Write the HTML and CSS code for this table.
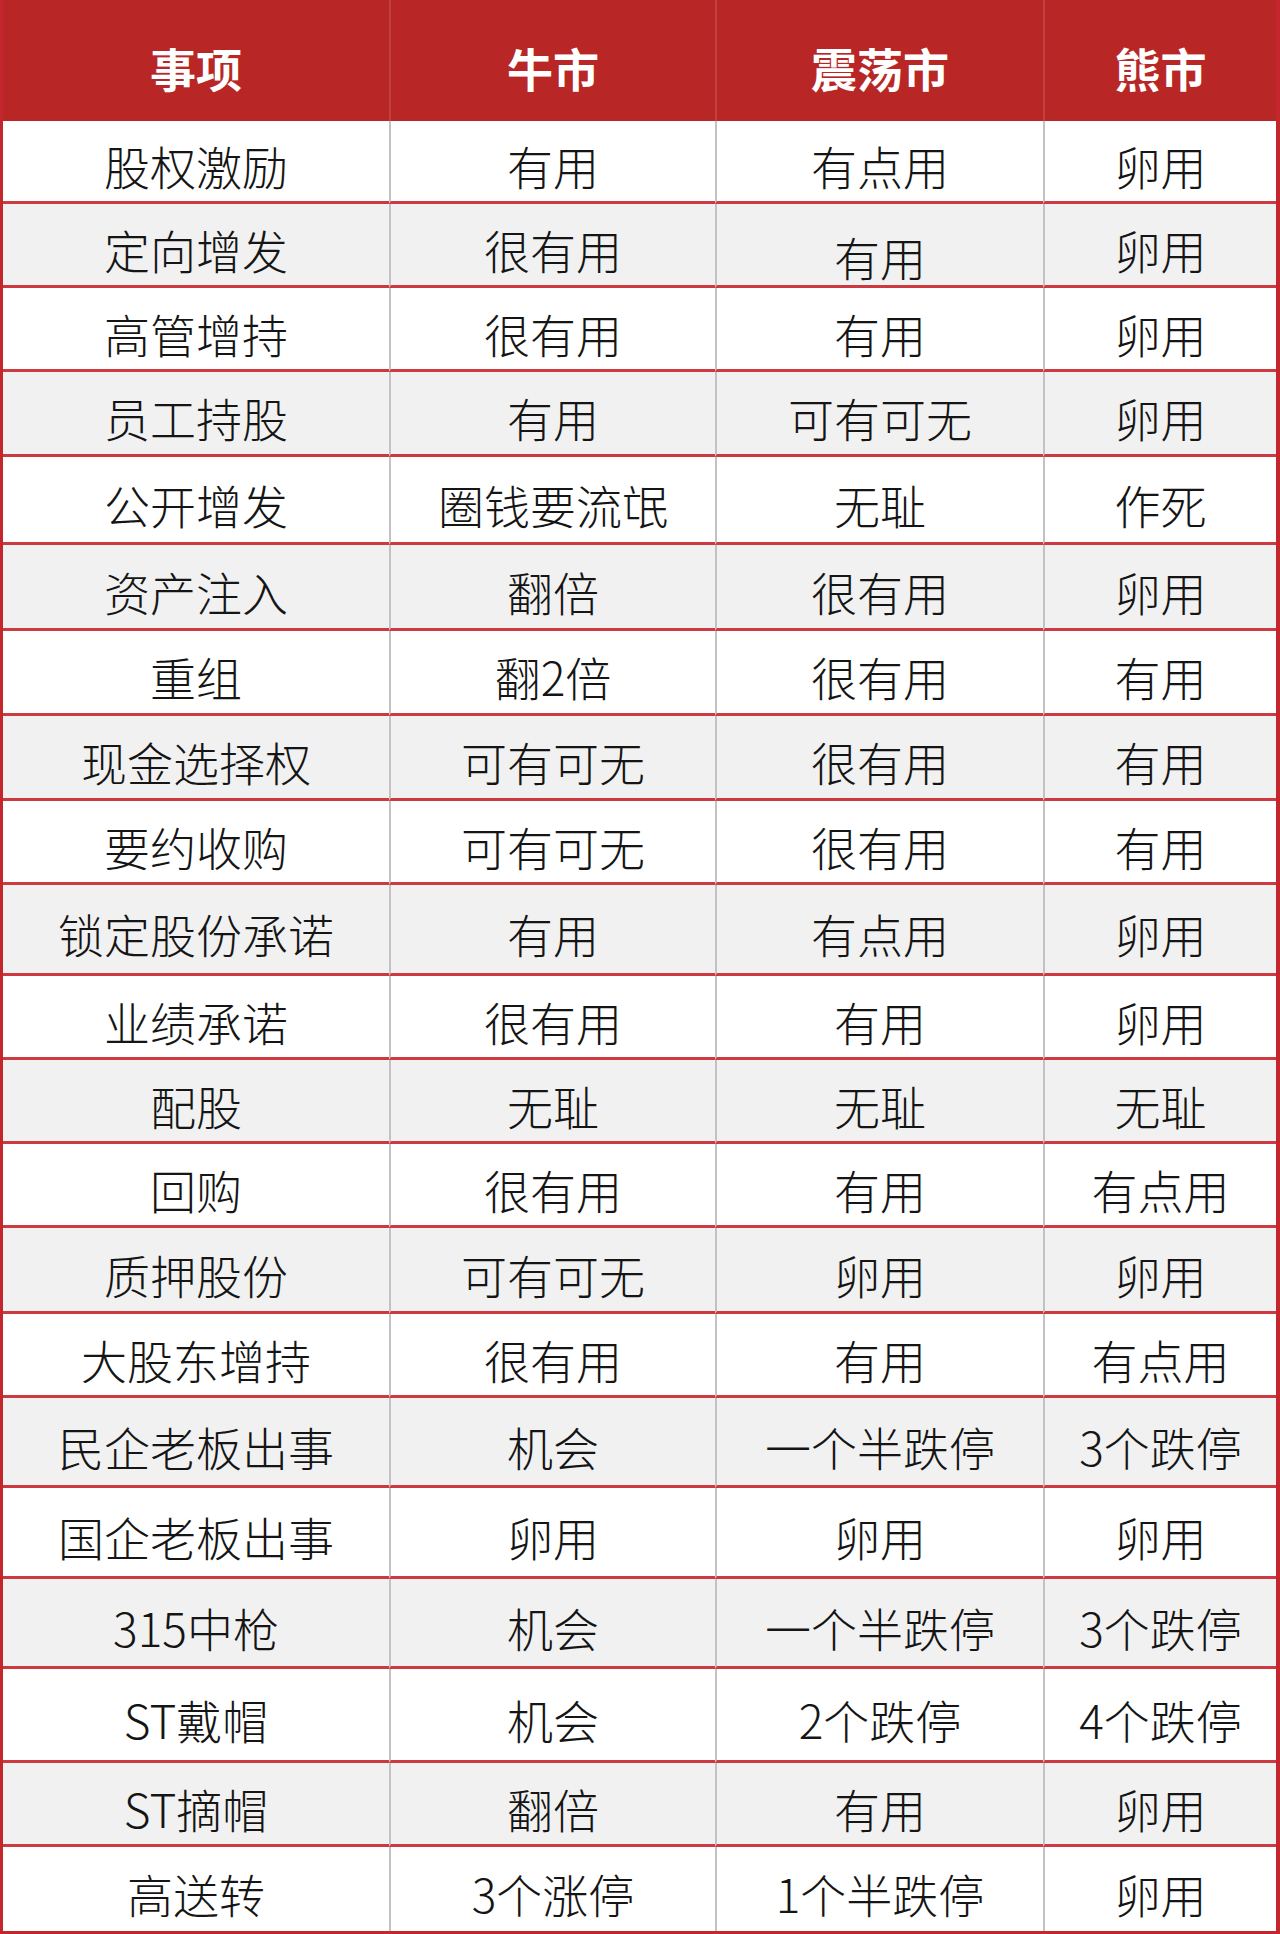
FILE: index.html
```html
<!DOCTYPE html>
<html lang="zh-CN">
<head>
<meta charset="utf-8">
<title>事项表</title>
<link rel="stylesheet" href="styles.css">
</head>
<body>
<div class="sheet">
  <div class="row head"><div class="cell">事项</div><div class="cell">牛市</div><div class="cell">震荡市</div><div class="cell">熊市</div></div>
  <div class="row"><div class="cell">股权激励</div><div class="cell">有用</div><div class="cell">有点用</div><div class="cell">卵用</div></div>
  <div class="row"><div class="cell">定向增发</div><div class="cell">很有用</div><div class="cell drop">有用</div><div class="cell">卵用</div></div>
  <div class="row"><div class="cell">高管增持</div><div class="cell">很有用</div><div class="cell">有用</div><div class="cell">卵用</div></div>
  <div class="row"><div class="cell">员工持股</div><div class="cell">有用</div><div class="cell">可有可无</div><div class="cell">卵用</div></div>
  <div class="row"><div class="cell">公开增发</div><div class="cell">圈钱要流氓</div><div class="cell">无耻</div><div class="cell">作死</div></div>
  <div class="row"><div class="cell">资产注入</div><div class="cell">翻倍</div><div class="cell">很有用</div><div class="cell">卵用</div></div>
  <div class="row"><div class="cell">重组</div><div class="cell">翻2倍</div><div class="cell">很有用</div><div class="cell">有用</div></div>
  <div class="row"><div class="cell">现金选择权</div><div class="cell">可有可无</div><div class="cell">很有用</div><div class="cell">有用</div></div>
  <div class="row"><div class="cell">要约收购</div><div class="cell">可有可无</div><div class="cell">很有用</div><div class="cell">有用</div></div>
  <div class="row"><div class="cell">锁定股份承诺</div><div class="cell">有用</div><div class="cell">有点用</div><div class="cell">卵用</div></div>
  <div class="row"><div class="cell">业绩承诺</div><div class="cell">很有用</div><div class="cell">有用</div><div class="cell">卵用</div></div>
  <div class="row"><div class="cell">配股</div><div class="cell">无耻</div><div class="cell">无耻</div><div class="cell">无耻</div></div>
  <div class="row"><div class="cell">回购</div><div class="cell">很有用</div><div class="cell">有用</div><div class="cell">有点用</div></div>
  <div class="row"><div class="cell">质押股份</div><div class="cell">可有可无</div><div class="cell">卵用</div><div class="cell">卵用</div></div>
  <div class="row"><div class="cell">大股东增持</div><div class="cell">很有用</div><div class="cell">有用</div><div class="cell">有点用</div></div>
  <div class="row"><div class="cell">民企老板出事</div><div class="cell">机会</div><div class="cell">一个半跌停</div><div class="cell">3个跌停</div></div>
  <div class="row"><div class="cell">国企老板出事</div><div class="cell">卵用</div><div class="cell">卵用</div><div class="cell">卵用</div></div>
  <div class="row"><div class="cell">315中枪</div><div class="cell">机会</div><div class="cell">一个半跌停</div><div class="cell">3个跌停</div></div>
  <div class="row"><div class="cell">ST戴帽</div><div class="cell">机会</div><div class="cell">2个跌停</div><div class="cell">4个跌停</div></div>
  <div class="row"><div class="cell">ST摘帽</div><div class="cell">翻倍</div><div class="cell">有用</div><div class="cell">卵用</div></div>
  <div class="row"><div class="cell">高送转</div><div class="cell">3个涨停</div><div class="cell">1个半跌停</div><div class="cell">卵用</div></div>
</div>
</body>
</html>
```
FILE: styles.css
```css
html, body {
  margin: 0;
  padding: 0;
  background: #ffffff;
}

body {
  font-family: "Noto Sans CJK SC", "Noto Sans", sans-serif;
}

.sheet {
  width: 1280px;
  box-sizing: border-box;
  display: grid;
  grid-template-columns: 386px 326px 328px 233px;
  grid-template-rows: 121px 83px 84px 84px 85px 88px 86px 85px 85px 84px 91px 84px 84px 84px 86px 84px 90px 91px 90px 94px 84px 84px;
  border-left: 3px solid #c3262c;
  border-right: 4px solid #c3262c;
  border-bottom: 3px solid #c3262c;
}

.row {
  display: contents;
}

.cell {
  display: flex;
  align-items: center;
  justify-content: center;
  box-sizing: border-box;
  padding-top: 8px;
  font-size: 46px;
  font-weight: 300;
  line-height: 1;
  color: #151515;
  background: #ffffff;
  border-bottom: 3px solid #cc3a40;
  white-space: nowrap;
}

.cell + .cell {
  border-left: 2px solid #c2c2c2;
}

.row:nth-child(odd) .cell {
  background: #f1f1f1;
}

.row:last-child .cell {
  border-bottom: 0;
}

.row.head .cell {
  background: #b82725;
  color: #ffffff;
  font-weight: 700;
  border-bottom: 0;
  padding-top: 12px;
}

.row.head .cell + .cell {
  border-left: 2px solid #c3403e;
}

.cell.drop {
  padding-top: 22px;
}
```
